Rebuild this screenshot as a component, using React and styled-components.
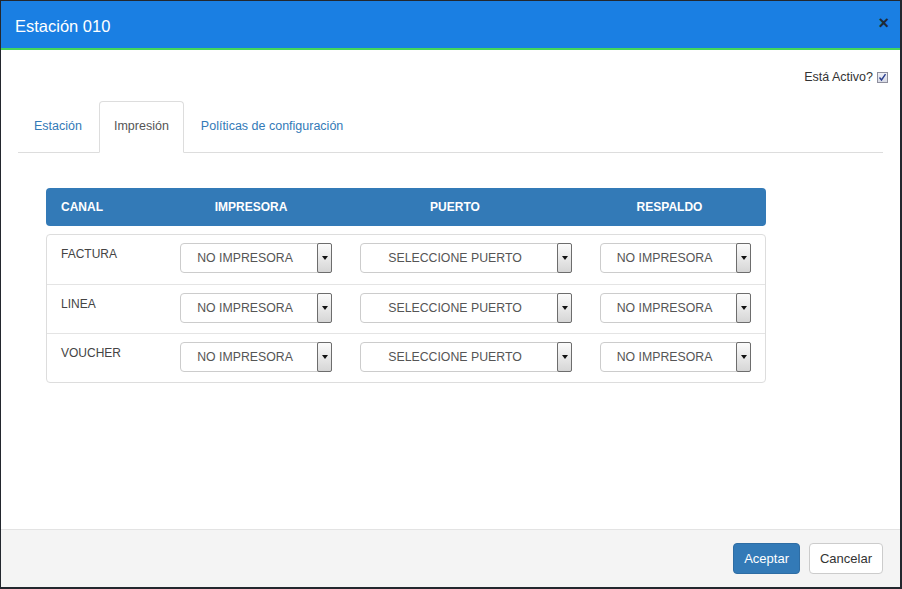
import React from 'react'
import styled, { createGlobalStyle } from 'styled-components'

const GlobalStyle = createGlobalStyle`
  html, body { margin: 0; padding: 0; background: #fff; }
  body { font-family: "Liberation Sans", Arial, sans-serif; color: #333; }
  * { box-sizing: border-box; }
`

const Frame = styled.div`
  width: 902px;
  height: 589px;
  border: 1px solid #23272e;
  border-right-width: 2px;
  border-bottom-width: 2px;
  display: flex;
  flex-direction: column;
  background: #fff;
  overflow: hidden;
`

const Header = styled.div`
  height: 49px;
  flex-shrink: 0;
  background: #1a7fe3;
  border-bottom: 2px solid #45d55b;
  display: flex;
  align-items: center;
  justify-content: space-between;
  padding: 4px 11px 0 14px;
`

const Title = styled.h4`
  margin: 0;
  color: #fff;
  font-size: 16.5px;
  font-weight: normal;
`

const Close = styled.span`
  color: #1f2a36;
  font-size: 18px;
  font-weight: bold;
  line-height: 1;
  margin-top: -8px;
`

const Body = styled.div`
  flex: 1;
  padding: 20px 17px 0 17px;
`

const ActiveRow = styled.div`
  display: flex;
  justify-content: flex-end;
  align-items: center;
  gap: 4px;
  font-size: 12.5px;
  color: #333;
  height: 14px;
  margin: 0 -5px 17px 0;
`

const Check = styled.span`
  width: 11px;
  height: 11px;
  border: 1px solid #8f8f9d;
  background: linear-gradient(#eef0f6, #d8dbe6);
  display: flex;
  align-items: center;
  justify-content: center;
`

const TabBar = styled.ul`
  list-style: none;
  margin: 0;
  padding: 0 0 0 1px;
  display: flex;
  align-items: flex-start;
  gap: 2px;
  border-bottom: 1px solid #ddd;
  height: 52px;
`

const Tab = styled.li`
  padding: 0 14px 2px 14px;
  height: ${p => (p.$active ? '52px' : '51px')};
  display: flex;
  align-items: center;
  font-size: 12.5px;
  color: ${p => (p.$active ? '#555' : '#337ab7')};
  background: #fff;
  border: 1px solid ${p => (p.$active ? '#ddd' : 'transparent')};
  border-bottom-color: ${p => (p.$active ? '#fff' : 'transparent')};
  border-radius: 4px 4px 0 0;
`

const Content = styled.div`
  padding: 35px 0 0 28px;
`

const TableBox = styled.div`
  width: 720px;
`

const HeadRow = styled.div`
  display: grid;
  grid-template-columns: 119px 172px 236px 193px;
  align-items: center;
  height: 38px;
  background: #337ab7;
  border-radius: 4px;
  color: #fff;
  font-size: 12px;
  font-weight: bold;
  margin-bottom: 8px;
`

const HeadCell = styled.div`
  text-align: ${p => (p.$left ? 'left' : 'center')};
  padding-left: ${p => (p.$left ? '15px' : '0')};
`

const Panel = styled.div`
  border: 1px solid #ddd;
  border-radius: 4px;
`

const Row = styled.div`
  display: grid;
  grid-template-columns: 118px 180px 240px 180px;
  height: 49px;
  padding-top: 8px;
  border-top: ${p => (p.$first ? 'none' : '1px solid #e4e4e4')};
`

const Label = styled.div`
  font-size: 12px;
  color: #444;
  padding: 4px 0 0 14px;
`

const Cell = styled.div`
  padding-left: 15px;
`

const Select = styled.div`
  width: ${p => p.$w}px;
  height: 30px;
  border: 1px solid #ccc;
  border-radius: 4px;
  display: flex;
  align-items: center;
  background: #fff;
`

const SelectText = styled.span`
  flex: 1;
  text-align: center;
  font-size: 12.3px;
  color: #555;
  padding-right: 8px;
`

const Arrow = styled.span`
  width: 15px;
  height: 30px;
  margin-right: -1px;
  border: 1px solid #6d6d6d;
  border-radius: 2px;
  background: linear-gradient(#fbfbfb, #d6d6d6);
  display: flex;
  align-items: center;
  justify-content: center;
  &::after {
    content: '';
    border-left: 3px solid transparent;
    border-right: 3px solid transparent;
    border-top: 4px solid #111;
  }
`

const Footer = styled.div`
  height: 58px;
  flex-shrink: 0;
  background: #f4f4f4;
  border-top: 1px solid #e3e3e3;
  display: flex;
  justify-content: flex-end;
  align-items: center;
  gap: 9px;
  padding: 0 17px 0 0;
`

const Button = styled.button`
  height: 31px;
  padding: 0 10px;
  font-family: inherit;
  font-size: 13px;
  border-radius: 4px;
  border: 1px solid ${p => (p.$primary ? '#2e6da4' : '#ccc')};
  background: ${p => (p.$primary ? '#337ab7' : '#fff')};
  color: ${p => (p.$primary ? '#fff' : '#333')};
`

const rows = ['FACTURA', 'LINEA', 'VOUCHER']

const Dropdown = ({ w, text }) => (
  <Select $w={w}>
    <SelectText>{text}</SelectText>
    <Arrow />
  </Select>
)

export default function App() {
  return (
    <Frame>
      <GlobalStyle />
      <Header>
        <Title>Estación 010</Title>
        <Close>×</Close>
      </Header>
      <Body>
        <ActiveRow>
          Está Activo?
          <Check>
            <svg width="9" height="9" viewBox="0 0 9 9">
              <path d="M1.5 4.5 L3.5 7 L7.5 1.2" fill="none" stroke="#2b3f8f" strokeWidth="1.4" />
            </svg>
          </Check>
        </ActiveRow>
        <TabBar>
          <Tab>Estación</Tab>
          <Tab $active>Impresión</Tab>
          <Tab>Políticas de configuración</Tab>
        </TabBar>
        <Content>
          <TableBox>
            <HeadRow>
              <HeadCell $left>CANAL</HeadCell>
              <HeadCell>IMPRESORA</HeadCell>
              <HeadCell>PUERTO</HeadCell>
              <HeadCell>RESPALDO</HeadCell>
            </HeadRow>
            <Panel>
              {rows.map((r, i) => (
                <Row key={r} $first={i === 0}>
                  <Label>{r}</Label>
                  <Cell><Dropdown w={152} text="NO IMPRESORA" /></Cell>
                  <Cell><Dropdown w={212} text="SELECCIONE PUERTO" /></Cell>
                  <Cell><Dropdown w={151} text="NO IMPRESORA" /></Cell>
                </Row>
              ))}
            </Panel>
          </TableBox>
        </Content>
      </Body>
      <Footer>
        <Button $primary>Aceptar</Button>
        <Button>Cancelar</Button>
      </Footer>
    </Frame>
  )
}
